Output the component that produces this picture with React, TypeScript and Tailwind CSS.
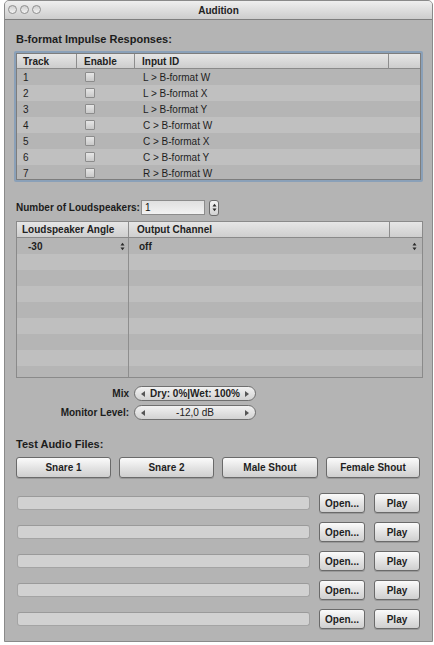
import React from "react";

const FONT = { fontFamily: '"Liberation Sans", Arial, sans-serif' };

const irRows = [
  ["1", "L > B-format W"],
  ["2", "L > B-format X"],
  ["3", "L > B-format Y"],
  ["4", "C > B-format W"],
  ["5", "C > B-format X"],
  ["6", "C > B-format Y"],
  ["7", "R > B-format W"],
];

function Light() {
  return (
    <span className="block h-[9px] w-[9px] rounded-full border border-[#8e8e8e] bg-gradient-to-b from-[#cfcfcf] to-[#f4f4f4]" />
  );
}

function UpDown({ className = "" }: { className?: string }) {
  return (
    <svg width="5" height="9" viewBox="0 0 5 9" className={className}>
      <path d="M0.5 3.5 L2.5 0.8 L4.5 3.5 Z" fill="#2a2a2a" />
      <path d="M0.5 5.5 L2.5 8.2 L4.5 5.5 Z" fill="#2a2a2a" />
    </svg>
  );
}

function Checkbox() {
  return (
    <span className="block h-[10px] w-[10px] rounded-[1px] border border-[#8c8c8c] bg-gradient-to-b from-[#e6e6e6] to-[#c9c9c9]" />
  );
}

function HeaderCell({ children, className = "" }: { children?: React.ReactNode; className?: string }) {
  return (
    <div className={`flex items-center whitespace-nowrap border-r border-[#8d8d8d] text-[10px] font-bold text-[#222] ${className}`}>
      {children}
    </div>
  );
}

function Pill({ children, bold }: { children: React.ReactNode; bold?: boolean }) {
  return (
    <div className="flex h-[15px] w-[122px] items-center justify-between rounded-full border border-[#6f6f6f] bg-gradient-to-b from-[#f2f2f2] to-[#d2d2d2] px-[6px]">
      <svg width="4" height="6" viewBox="0 0 4 6">
        <path d="M4 0 L0 3 L4 6 Z" fill="#555" />
      </svg>
      <span className={`text-[10px] text-[#222] ${bold ? "font-bold" : ""}`}>{children}</span>
      <svg width="4" height="6" viewBox="0 0 4 6">
        <path d="M0 0 L4 3 L0 6 Z" fill="#555" />
      </svg>
    </div>
  );
}

function Button({ label, className = "" }: { label: string; className?: string }) {
  return (
    <div
      className={`flex items-center justify-center rounded-[3px] border border-[#6a6a6a] bg-gradient-to-b from-[#fbfbfb] via-[#e4e4e4] to-[#cfcfcf] text-[10px] font-bold text-[#1e1e1e] shadow-[0_1px_0_rgba(0,0,0,0.15)] ${className}`}
    >
      {label}
    </div>
  );
}

export default function App() {
  return (
    <div className="h-[645px] w-[434px] bg-white" style={FONT}>
      <div className="ml-[4px] flex h-[642px] w-[429px] flex-col overflow-hidden rounded-t-[5px] border border-[#8a8a8a] bg-[#b4b4b4]">
        {/* title bar */}
        <div className="relative flex h-[19px] items-center justify-center border-b border-[#7e7e7e] bg-gradient-to-b from-[#efefef] to-[#cdcdcd]">
          <div className="absolute left-[3px] top-[4px] flex gap-[3px]">
            <Light />
            <Light />
            <Light />
          </div>
          <span className="text-[10px] font-bold text-[#222]">Audition</span>
        </div>

        <div className="flex flex-col pl-[9px] pr-[5px]">
          <div className="mt-[12px] pl-[2px] text-[11px] font-bold leading-[14px] text-[#1c1c1c]">B-format Impulse Responses:</div>

          {/* IR table */}
          <div className="mt-[5px] h-[131px] w-[409px] rounded-[2px] border-2 border-[#8aa0b8] bg-[#b6b6b6]">
            <div className="h-[127px] overflow-hidden border border-[#7d7d7d]">
              <div className="grid h-[15px] grid-cols-[60px_58px_254px_1fr] border-b border-[#8a8a8a] bg-gradient-to-b from-[#e6e6e6] to-[#cdcdcd]">
                <HeaderCell className="pl-[6px]">Track</HeaderCell>
                <HeaderCell className="pl-[7px]">Enable</HeaderCell>
                <HeaderCell className="pl-[7px]">Input ID</HeaderCell>
                <HeaderCell className="border-r-0" />
              </div>
              {irRows.map(([n, id], i) => (
                <div
                  key={n}
                  className={`grid h-[16px] grid-cols-[60px_58px_1fr] items-center text-[10px] text-[#1e1e1e] ${
                    i % 2 === 0 ? "bg-[#b5b5b5]" : "bg-[#c0c0c0]"
                  }`}
                >
                  <span className="pl-[6px]">{n}</span>
                  <span className="flex pl-[8px]">
                    <Checkbox />
                  </span>
                  <span className="pl-[8px]">{id}</span>
                </div>
              ))}
            </div>
          </div>

          {/* loudspeakers */}
          <div className="mt-[17px] flex h-[17px] items-center pl-[2px]">
            <span className="w-[125px] whitespace-nowrap text-[10px] font-bold text-[#1c1c1c]">Number of Loudspeakers:</span>
            <div className="flex h-[15px] w-[64px] items-center border border-[#8c8c8c] bg-gradient-to-b from-[#e0e0e0] to-[#f2f2f2] pl-[3px] text-[10px] text-[#111]">
              1
            </div>
            <div className="ml-[4px] flex h-[16px] w-[10px] items-center justify-center rounded-[3px] border border-[#6d6d6d] bg-gradient-to-b from-[#f4f4f4] to-[#d2d2d2]">
              <UpDown />
            </div>
          </div>

          {/* loudspeaker table */}
          <div className="ml-[2px] mt-[5px] flex h-[157px] w-[407px] flex-col overflow-hidden border border-[#8a8a8a]">
            <div className="grid h-[16px] shrink-0 grid-cols-[112px_261px_1fr] border-b border-[#8a8a8a] bg-gradient-to-b from-[#e6e6e6] to-[#cfcfcf]">
              <HeaderCell className="pl-[5px]">Loudspeaker Angle</HeaderCell>
              <HeaderCell className="pl-[8px]">Output Channel</HeaderCell>
              <HeaderCell className="border-r-0" />
            </div>
            <div className="flex-1">
              {Array.from({ length: 9 }).map((_, i) => (
                <div
                  key={i}
                  className={`grid h-[16px] grid-cols-[112px_1fr] items-center text-[10px] font-bold text-[#1e1e1e] ${
                    i % 2 === 0 ? "bg-[#b5b5b5]" : "bg-[#bfbfbf]"
                  }`}
                >
                  <div className="flex h-full items-center justify-between border-r border-[#8e8e8e] pl-[11px] pr-[3px]">
                    {i === 0 && (
                      <>
                        <span>-30</span>
                        <UpDown />
                      </>
                    )}
                  </div>
                  <div className="flex items-center justify-between pl-[10px] pr-[5px]">
                    {i === 0 && (
                      <>
                        <span>off</span>
                        <UpDown />
                      </>
                    )}
                  </div>
                </div>
              ))}
              <div className="grid h-[20px] grid-cols-[112px_1fr] bg-[#b5b5b5]">
                <div className="border-r border-[#8e8e8e]" />
              </div>
            </div>
          </div>

          {/* mix / monitor */}
          <div className="mt-[8px] flex flex-col gap-[4px]">
            <div className="flex items-center">
              <span className="w-[120px] pr-[5px] text-right text-[10px] font-bold text-[#1c1c1c]">Mix</span>
              <Pill bold>Dry: 0%|Wet: 100%</Pill>
            </div>
            <div className="flex items-center">
              <span className="w-[120px] pr-[5px] text-right text-[10px] font-bold text-[#1c1c1c]">Monitor Level:</span>
              <Pill>-12,0 dB</Pill>
            </div>
          </div>

          <div className="mt-[17px] pl-[2px] text-[11px] font-bold leading-[14px] text-[#1c1c1c]">Test Audio Files:</div>

          <div className="mt-[6px] flex gap-[8px] pl-[2px]">
            <Button label="Snare 1" className="h-[21px] w-[95px]" />
            <Button label="Snare 2" className="h-[21px] w-[95px]" />
            <Button label="Male Shout" className="h-[21px] w-[96px]" />
            <Button label="Female Shout" className="h-[21px] w-[94px]" />
          </div>

          <div className="mt-[15px] flex flex-col gap-[9px] pl-[3px]">
            {Array.from({ length: 5 }).map((_, i) => (
              <div key={i} className="flex h-[20px] items-center">
                <div className="h-[14px] w-[293px] rounded-[3px] border border-[#a4a4a4] border-t-[#9a9a9a] bg-[#d1d1d1]" />
                <Button label="Open..." className="ml-[9px] h-[20px] w-[46px]" />
                <Button label="Play" className="ml-[9px] h-[20px] w-[46px]" />
              </div>
            ))}
          </div>
        </div>
      </div>
    </div>
  );
}
